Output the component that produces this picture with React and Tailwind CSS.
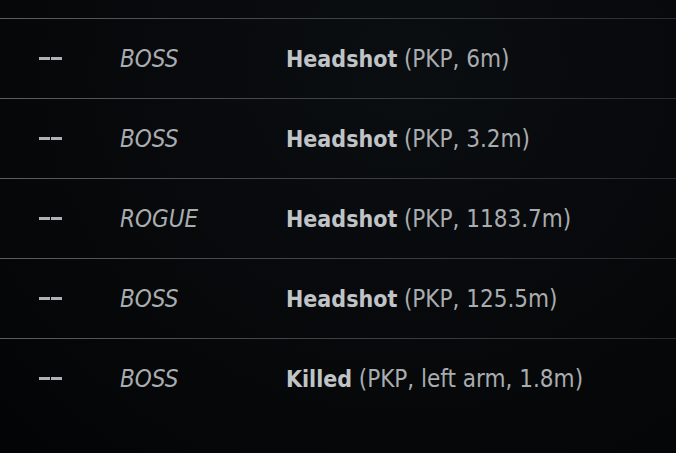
export default function App() {
  const rows = [
    { type: "BOSS", verb: "Headshot", detail: "(PKP, 6m)" },
    { type: "BOSS", verb: "Headshot", detail: "(PKP, 3.2m)" },
    { type: "ROGUE", verb: "Headshot", detail: "(PKP, 1183.7m)" },
    { type: "BOSS", verb: "Headshot", detail: "(PKP, 125.5m)" },
    { type: "BOSS", verb: "Killed", detail: "(PKP, left arm, 1.8m)" },
  ];
  return (
    <div
      className="w-[676px] h-[453px] overflow-hidden bg-[radial-gradient(ellipse_at_60%_15%,#0b0e11_0%,#06080a_60%,#030405_100%)] pt-[18px] text-[#b4b8bb]"
      style={{ fontFamily: '"DejaVu Sans Condensed", "DejaVu Sans", sans-serif' }}
    >
      {rows.map((r, i) => (
        <div key={i} className="flex flex-col">
          <div className="h-px bg-gradient-to-r from-[#5a5e61] via-[#3d4144] to-[#2a2d30]" />
          <div className="h-[79px] flex items-center">
            <div className="w-[120px] pl-[39px] flex items-center gap-[1px]">
              <span className="block w-[11px] h-[3px] bg-[#aeb2b5]" />
              <span className="block w-[11px] h-[3px] bg-[#aeb2b5]" />
            </div>
            <div className="w-[166px] italic text-[24px] font-light text-[#a9adb0]">{r.type}</div>
            <div className="text-[23px] whitespace-nowrap">
              <span className="font-bold text-[#c0c4c7]">{r.verb}</span>{" "}
              <span className="text-[24px] text-[#a9adb0]">{r.detail}</span>
            </div>
          </div>
        </div>
      ))}
    </div>
  );
}
